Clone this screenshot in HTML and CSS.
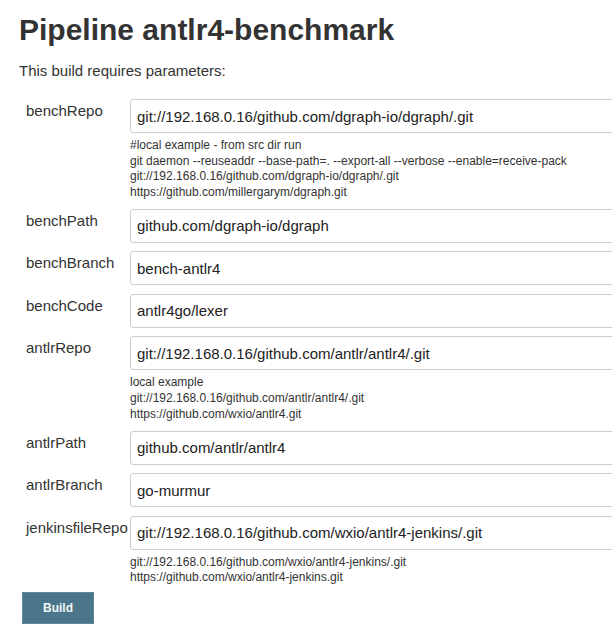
FILE: index.html
```html
<!DOCTYPE html>
<html>
<head>
<meta charset="utf-8">
<link rel="stylesheet" href="styles.css">
</head>
<body>
<div class="page">
  <h1 class="title">Pipeline antlr4-benchmark</h1>
  <p class="intro">This build requires parameters:</p>
  <div class="params">
    <div class="param">
      <div class="label">benchRepo</div>
      <div class="field">
        <input class="input" type="text" value="git://192.168.0.16/github.com/dgraph-io/dgraph/.git">
        <div class="desc">#local example - from src dir run<br>git daemon --reuseaddr --base-path=. --export-all --verbose --enable=receive-pack<br>git://192.168.0.16/github.com/dgraph-io/dgraph/.git<br>https://github.com/millergarym/dgraph.git</div>
      </div>
    </div>
    <div class="param">
      <div class="label">benchPath</div>
      <div class="field"><input class="input" type="text" value="github.com/dgraph-io/dgraph"></div>
    </div>
    <div class="param">
      <div class="label">benchBranch</div>
      <div class="field"><input class="input" type="text" value="bench-antlr4"></div>
    </div>
    <div class="param">
      <div class="label">benchCode</div>
      <div class="field"><input class="input" type="text" value="antlr4go/lexer"></div>
    </div>
    <div class="param">
      <div class="label">antlrRepo</div>
      <div class="field">
        <input class="input" type="text" value="git://192.168.0.16/github.com/antlr/antlr4/.git">
        <div class="desc">local example<br>git://192.168.0.16/github.com/antlr/antlr4/.git<br>https://github.com/wxio/antlr4.git</div>
      </div>
    </div>
    <div class="param">
      <div class="label">antlrPath</div>
      <div class="field"><input class="input" type="text" value="github.com/antlr/antlr4"></div>
    </div>
    <div class="param">
      <div class="label">antlrBranch</div>
      <div class="field"><input class="input" type="text" value="go-murmur"></div>
    </div>
    <div class="param">
      <div class="label">jenkinsfileRepo</div>
      <div class="field">
        <input class="input" type="text" value="git://192.168.0.16/github.com/wxio/antlr4-jenkins/.git">
        <div class="desc">git://192.168.0.16/github.com/wxio/antlr4-jenkins/.git<br>https://github.com/wxio/antlr4-jenkins.git</div>
      </div>
    </div>
  </div>
  <button class="build" type="button">Build</button>
</div>
</body>
</html>
```

FILE: styles.css
```css
html, body {
  margin: 0;
  padding: 0;
  background: #fff;
  overflow: hidden;
}
body {
  font-family: "Liberation Sans", Arial, Helvetica, sans-serif;
  color: #333;
}
.page {
  padding: 12px 0 0 19px;
}
.title {
  margin: 0;
  font-size: 30px;
  line-height: 36px;
  font-weight: bold;
  color: #333;
}
.intro {
  margin: 14px 0 0 0;
  font-size: 15px;
  line-height: 18px;
}
.params {
  margin-top: 19px;
  padding-left: 7px;
  display: flex;
  flex-direction: column;
  gap: 8.5px;
}
.param {
  display: flex;
  align-items: flex-start;
}
.label {
  width: 104px;
  flex: none;
  font-size: 15px;
  line-height: 18px;
  padding-top: 3px;
  white-space: nowrap;
}
.field {
  flex: none;
  width: 500px;
}
.input {
  display: block;
  box-sizing: border-box;
  width: 100%;
  height: 34px;
  margin: 0;
  padding: 0 6px;
  border: 1px solid #ccc;
  border-radius: 3px;
  font-family: "Liberation Sans", Arial, Helvetica, sans-serif;
  font-size: 15px;
  color: #222;
  background: #fff;
  outline: none;
}
.desc {
  margin-top: 5px;
  font-size: 12px;
  line-height: 15.6px;
  color: #333;
  white-space: nowrap;
}
.build {
  display: block;
  margin: 6px 0 0 3px;
  width: 72px;
  height: 32px;
  box-sizing: border-box;
  background: #4b758b;
  border: 1px solid #5e889c;
  border-radius: 0;
  color: #f2f5f7;
  font-family: "Liberation Sans", Arial, Helvetica, sans-serif;
  font-size: 12px;
  font-weight: bold;
  padding: 0;
}
```
